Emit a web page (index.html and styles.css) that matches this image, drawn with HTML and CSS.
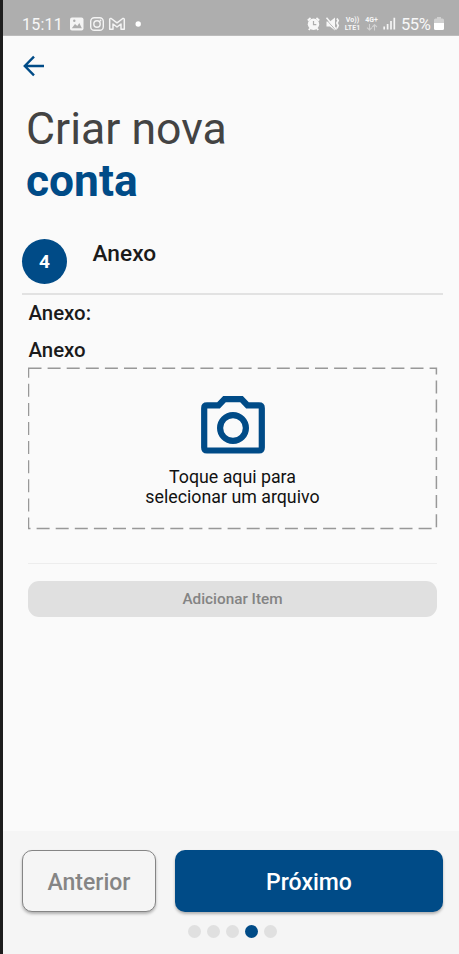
FILE: index.html
```html
<!DOCTYPE html>
<html lang="pt-BR">
<head>
<meta charset="utf-8">
<title>Criar nova conta</title>
<link rel="stylesheet" href="styles.css">
</head>
<body>
<div class="screen">
  <header class="status">
    <span class="clock">15:11</span>
    <svg class="left-icons" width="72" height="16" viewBox="0 0 72 16">
      <rect x="0" y="1.5" width="13.5" height="13" rx="2" fill="#f4f4f4"/>
      <path d="M1.800 12.200 5 8l2.300 2 2-3 2.600 5.200z" fill="#aeaeae"/><circle cx="4.300" cy="4.800" r="1.200" fill="#aeaeae"/>
      <g fill="none" stroke="#f4f4f4" stroke-width="1.400"><rect x="20.700" y="1.700" width="12.600" height="12.600" rx="3.600"/><circle cx="27" cy="8" r="3.200"/></g>
      <circle cx="30.500" cy="4.500" r=".9" fill="#f4f4f4"/>
      <path d="M39.700 13.300V3.500Q39.700 2 41.200 2.500L47 6.800 52.800 2.500Q54.300 2 54.300 3.500V13.300H51V8L47 11 43 8V13.300Z" fill="none" stroke="#f4f4f4" stroke-width="1.500" stroke-linejoin="round"/>
      <circle cx="68.200" cy="8" r="2.700" fill="#fff"/>
    </svg>
    <span class="spacer"></span>
    <svg class="alarm" width="34" height="16" viewBox="0 0 34 16">
      <circle cx="6.500" cy="8.300" r="5.700" fill="#f7f7f7"/>
      <path d="M.8 4.500 3.600 2M12.200 4.500 9.400 2M3 12.500 1.800 14M10 12.500l1.200 1.500" stroke="#f7f7f7" stroke-width="1.800"/>
      <path d="M6.500 5v3.600H9.300" fill="none" stroke="#aeaeae" stroke-width="1.200"/>
      <path d="M19.500 5.500h3.500l5-4v13l-5-4h-3.500z" fill="#f7f7f7"/>
      <path d="M18.700 2.700 29 14.500" stroke="#aeaeae" stroke-width="1"/><path d="M19.500 1.700 29.500 13.500" stroke="#f7f7f7" stroke-width="1.500"/>
      <path d="M29.900 2.500 31.200 4.500 29.900 7 31.200 9.500 29.900 12.500" fill="none" stroke="#f7f7f7" stroke-width="1.700"/>
    </svg>
    <span class="volte"><span>Vo))</span><span>LTE1</span></span>
    <span class="net"><span>4G+</span>
      <svg width="12" height="7" viewBox="0 0 12 7"><path d="M3.500 0v6M1 3.600 3.500 6 6 3.600M8.500 6.500V.7M6.300 3 8.500.7 11 3" fill="none" stroke="#d2d2d2" stroke-width="1.100"/></svg>
    </span>
    <svg class="signal" width="13" height="13" viewBox="0 0 13 13"><path d="M1.200 9.500V12.500M4.600 7V12.500M8 4V12.500M11.300.8V12.500" stroke="#f5f5f5" stroke-width="1.700"/></svg>
    <span class="percent">55%</span>
    <svg class="battery" width="10" height="14" viewBox="0 0 10 14"><path d="M3 0h4v1.500h1.500Q10 1.500 10 3v3H0V3Q0 1.500 1.500 1.500H3z" fill="#d0d0d0"/><path d="M0 6h10v5.500q0 1.500-1.500 1.500h-7Q0 13 0 11.500z" fill="#fff"/></svg>
  </header>
  <main class="content">
    <svg class="back" width="22" height="22" viewBox="0 0 22 22"><path d="M21 11H2.500M11 1.700 1.800 11 11 20.300" fill="none" stroke="#004b87" stroke-width="2.400"/></svg>
    <h1 class="title"><span class="thin">Criar nova</span><strong>conta</strong></h1>
    <div class="step"><span class="number">4</span><h2>Anexo</h2></div>
    <section class="form">
      <h3 class="group">Anexo:</h3>
      <h3 class="label">Anexo</h3>
      <div class="drop">
        <svg class="dashes" width="410" height="163" viewBox="0 0 410 163"><path d="M.5 1.200H408.400V161.500H.5Z" fill="none" stroke="#989898" stroke-width="1.500" stroke-dasharray="13 6.100"/></svg>
        <svg class="camera" width="64" height="58" viewBox="0 0 64 58">
          <path d="M6 9.400H17.500L23.500 3.200H40.500L46.500 9.400H58Q60.800 9.400 60.800 12.200V51.600Q60.800 54.500 58 54.500H6Q3.200 54.500 3.200 51.600V12.200Q3.200 9.400 6 9.400Z" fill="none" stroke="#004b87" stroke-width="6.200"/>
          <circle cx="32" cy="32" r="12.900" fill="none" stroke="#004b87" stroke-width="6.200"/>
        </svg>
        <p>Toque aqui para<br>selecionar um arquivo</p>
      </div>
      <div class="divider"></div>
      <button class="add">Adicionar Item</button>
    </section>
  </main>
  <footer class="footer">
    <div class="actions"><button class="prev">Anterior</button><button class="next">Próximo</button></div>
    <div class="dots"><i></i><i></i><i></i><i class="active"></i><i></i></div>
  </footer>
</div>
</body>
</html>
```
FILE: styles.css
```css
* { box-sizing: border-box; }
body { margin: 0; font-family: Roboto, sans-serif; background: #fafafa; color: #1b1b1b; }
h1, h2, h3, p { margin: 0; }
button { font-family: inherit; padding: 0; border: 0; }
svg { display: block; flex: none; }
.screen { height: 954px; border-left: 3px solid #1d1d1d; display: flex; flex-direction: column; overflow: hidden; }
.status { height: 36px; flex: none; background: #aeaeae; color: #f7f7f7; display: flex; align-items: center; padding: 12px 15px 0 19px; border-bottom: 1px solid #bcbcbc; }
.clock { font-size: 16px; line-height: 18px; padding-top: 2px; width: 48px; letter-spacing: .2px; }
.spacer { flex: 1; }
.alarm { margin-right: 3px; }
.volte { width: 17px; font-size: 7px; line-height: 8px; font-weight: 700; display: flex; flex-direction: column; align-items: center; margin-right: 3px; }
.net { width: 15px; font-size: 7px; line-height: 8px; font-weight: 700; display: flex; flex-direction: column; align-items: center; margin-right: 4px; }
.signal { margin-right: 5px; }
.percent { font-size: 16.5px; line-height: 18px; padding-top: 2px; width: 29px; margin-right: 4px; letter-spacing: -.4px; }
.content { flex: 1; padding: 19px 16px 0 19px; }
.back { margin-left: 1px; }
.title { margin: 26px 0 0 4px; font-size: 44.6px; line-height: 53px; font-weight: 400; color: #434343; display: flex; flex-direction: column; }
.title strong { color: #004b87; font-weight: 700; font-size: 44.3px; line-height: 51px; margin-bottom: 1px; }
.step { height: 87px; display: flex; border-bottom: 2px solid #e2e2e2; padding-top: 31px; }
.number { width: 45px; height: 45px; border-radius: 50%; background: #004b87; color: #fff; display: grid; place-items: center; font-size: 19px; font-weight: 700; }
.step h2 { margin-left: 25.5px; font-size: 22.7px; line-height: 30px; font-weight: 500; }
.form { padding: 0 6px; }
.group, .label { padding-left: .5px; font-size: 20.4px; line-height: 24px; font-weight: 500; }
.group { margin-top: 6px; }
.label { margin-top: 13px; }
.drop { position: relative; height: 163px; margin-top: 5px; padding-top: 29px; display: flex; flex-direction: column; align-items: center; }
.dashes { position: absolute; left: 0; top: 0; }
.drop p { margin-top: 13px; font-size: 17.8px; line-height: 20px; text-align: center; color: #111; }
.divider { height: 1px; background: #ededed; margin-top: 33px; }
.add { display: block; width: 100%; height: 36px; margin-top: 17px; border-radius: 11px; background: #e0e0e0; color: #848484; font-size: 15.3px; font-weight: 500; }
.footer { height: 123px; flex: none; background: #f5f5f5; padding: 19px 16px 0 19px; }
.actions { display: flex; gap: 19px; }
.actions button { height: 62px; border-radius: 10px; font-size: 23px; padding-top: 2px; font-weight: 500; box-shadow: 0 2px 3px rgba(0,0,0,.28); }
.actions .prev { width: 134px; background: #f5f5f5; border: 1px solid #858585; color: #858585; }
.actions .next { flex: 1; background: #004b87; color: #fff; }
.dots { display: flex; justify-content: center; gap: 6px; margin-top: 13px; }
.dots i { width: 13px; height: 13px; border-radius: 50%; background: #e0e0e0; }
.dots .active { background: #004b87; }
```
